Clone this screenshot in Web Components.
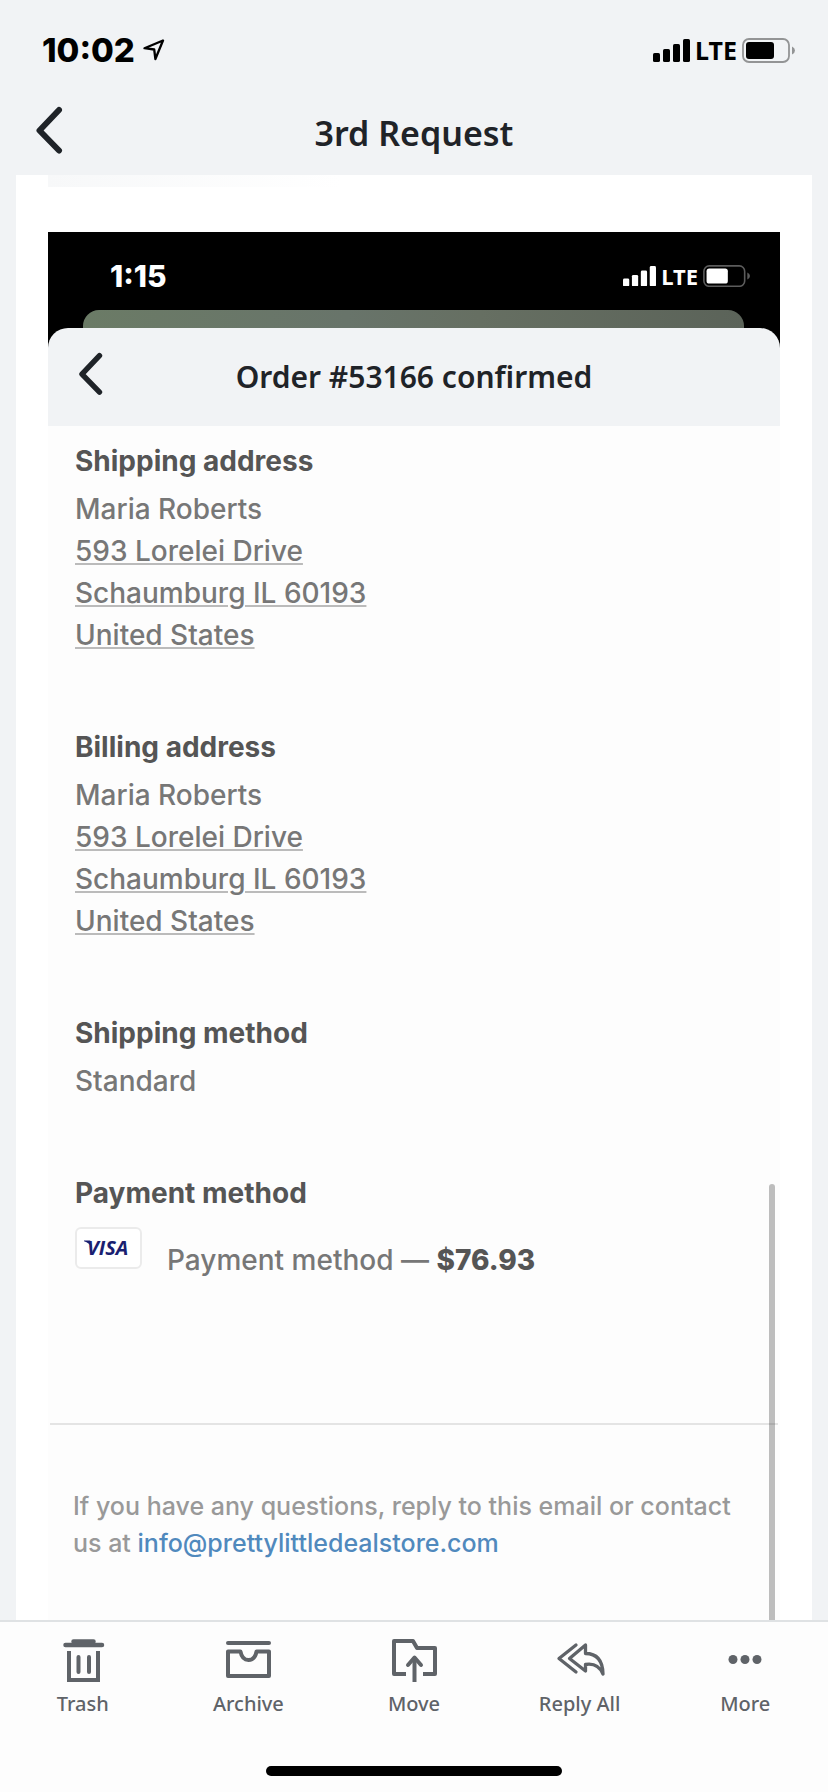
<!DOCTYPE html>
<html lang="en">
<head>
<meta charset="utf-8">
<meta name="viewport" content="width=device-width, initial-scale=1">
<title>3rd Request</title>
<style>
  html, body { margin: 0; height: 100%; }
  body { font-family: Inter, "Liberation Sans", sans-serif; background: #f1f3f5; }
</style>
</head>
<body>
<mail-screen>
  <status-bar slot="status" level="28" located>10:02</status-bar>
  <nav-header slot="header">3rd Request</nav-header>
  <shared-capture>
    <status-bar slot="status" level="24" compact>1:15</status-bar>
    <nav-header slot="header" compact>Order #53166 confirmed</nav-header>
    <order-section heading="Shipping address">
      <span>Maria Roberts</span>
      <address-link>593 Lorelei Drive</address-link>
      <address-link>Schaumburg IL 60193</address-link>
      <address-link>United States</address-link>
    </order-section>
    <order-section heading="Billing address">
      <span>Maria Roberts</span>
      <address-link>593 Lorelei Drive</address-link>
      <address-link>Schaumburg IL 60193</address-link>
      <address-link>United States</address-link>
    </order-section>
    <order-section heading="Shipping method">
      <span>Standard</span>
    </order-section>
    <order-section heading="Payment method">
      <payment-line amount="$76.93">Payment method —</payment-line>
    </order-section>
    <contact-note slot="footer" email="info@prettylittledealstore.com">If you have any questions, reply to this email or contact us at</contact-note>
  </shared-capture>
  <action-bar slot="actions">
    <action-button icon="trash">Trash</action-button>
    <action-button icon="archive">Archive</action-button>
    <action-button icon="move">Move</action-button>
    <action-button icon="replyall">Reply All</action-button>
    <action-button icon="more">More</action-button>
  </action-bar>
</mail-screen>

<script>
class Base extends HTMLElement {
  connectedCallback() {
    if (this.shadowRoot) return;
    this.attachShadow({ mode: 'open' }).innerHTML = this.render();
  }
}

customElements.define('mail-screen', class extends Base {
  render() {
    return `<style>
      :host { display: flex; flex-direction: column; height: 100vh; overflow: hidden; background: #f1f3f5; }
      main { flex: 1; min-height: 0; overflow: hidden; margin: 0 16px; padding: 0 32px; background: #fff; }
      .edge { height: 12px; margin-bottom: 45px; background: linear-gradient(90deg, #f7f8f9, #fff 40%); }
    </style>
    <slot name="status"></slot>
    <slot name="header"></slot>
    <main><div class="edge"></div><slot></slot></main>
    <slot name="actions"></slot>`;
  }
});

customElements.define('status-bar', class extends Base {
  render() {
    const level = this.getAttribute('level');
    const arrow = this.hasAttribute('located')
      ? `<svg width="22" height="22" viewBox="0 0 22 22" aria-hidden="true"><path d="M20 1.5 1.5 9.2 11.2 10.5 12.4 20Z" fill="none" stroke="currentColor" stroke-width="2.3" stroke-linejoin="round"/></svg>` : '';
    return `<style>
      :host { display: flex; align-items: center; justify-content: space-between; box-sizing: border-box; height: 100px; padding: 0 33px 0 42px; color: #000;
        --time: 33px; --net: 25px; --sig: 37px; --bat: 53px; --line: #939495; }
      :host([compact]) { height: 78px; padding: 10px 30px 0 62px; color: #fff; --time: 30px; --net: 22px; --sig: 33px; --bat: 47px; --line: #5c5c5c; }
      .group { display: flex; align-items: center; gap: 5px; }
      .clock { gap: 8px; }
      time { font-weight: 800; font-size: var(--time); line-height: 40px; }
      .net { font: 700 var(--net)/40px "Noto Sans", sans-serif; }
      .sig { width: var(--sig); } .bat { width: var(--bat); }
      svg { display: block; }
    </style>
    <div class="group clock"><time><slot></slot></time>${arrow}</div>
    <div class="group">
      <svg class="sig" viewBox="0 0 37 23" fill="currentColor" aria-hidden="true"><rect y="14" width="7" height="9" rx="1.6"/><rect x="10" y="10" width="7" height="13" rx="1.6"/><rect x="20" y="5" width="7" height="18" rx="1.6"/><rect x="30" width="7" height="23" rx="1.6"/></svg>
      <span class="net">LTE</span>
      <svg class="bat" viewBox="0 0 53 25" aria-hidden="true"><rect x="1" y="1" width="46" height="23" rx="6" fill="none" stroke="var(--line)" stroke-width="1.8"/><rect x="4" y="4" width="${level}" height="17" rx="3" fill="currentColor"/><path d="M50 8.500q3 1.500 3 4t-3 4z" fill="var(--line)"/></svg>
    </div>`;
  }
});

customElements.define('nav-header', class extends Base {
  render() {
    return `<style>
      :host { display: grid; grid-template-columns: 80px 1fr 80px; align-items: center; box-sizing: border-box; height: 75px; padding: 0 2px 9px; color: #1f2328; --title: 34px; --icon: 30px; --inset: 32px; }
      :host([compact]) { height: 98px; padding: 0; --title: 30px; --icon: 27px; --inset: 29px; }
      button { all: unset; justify-self: start; padding-left: var(--inset); padding-bottom: 7px; cursor: pointer; }
      svg { display: block; width: var(--icon); }
      h1 { margin: 0; text-align: center; font: 600 var(--title)/48px "Noto Sans", sans-serif; white-space: nowrap; }
    </style>
    <button aria-label="Back"><svg viewBox="0 0 30 48" fill="none" stroke="currentColor" stroke-width="6" stroke-linecap="round" stroke-linejoin="round"><path d="M25 4 5.500 24.500 25 44.500"/></svg></button>
    <h1><slot></slot></h1>`;
  }
});

customElements.define('shared-capture', class extends Base {
  render() {
    return `<style>
      :host { display: block; position: relative; background: #fdfdfd; }
      .top { background: #000; }
      .behind { height: 18px; margin: 0 36px 0 35px; border-radius: 16px 16px 0 0; background: linear-gradient(90deg, #6b7b66, #68746a 40%, #666f62 60%, #5b6359); }
      .sheet { background: #f1f3f5; border-radius: 20px 20px 0 0; }
      .order { padding: 14px 27px 72px; }
      .foot { margin: 0 2px; border-top: 2px solid #e4e4e4; }
      .thumb { position: absolute; right: 5px; top: 952px; bottom: 0; width: 6px; border-radius: 3px; background: rgba(0,0,0,.25); }
    </style>
    <div class="top">
      <slot name="status"></slot>
      <div class="behind"></div>
      <div class="sheet"><slot name="header"></slot></div>
    </div>
    <div class="order"><slot></slot></div>
    <div class="foot"><slot name="footer"></slot></div>
    <div class="thumb"></div>`;
  }
});

customElements.define('order-section', class extends Base {
  render() {
    return `<style>
      :host { display: block; margin-bottom: 70px; font-size: 28px; line-height: 42px; color: #777; }
      h2 { margin: 0 0 6px; font-size: 28px; font-weight: 650; color: #555; }
      .lines { display: flex; flex-direction: column; align-items: flex-start; font-weight: 500; }
    </style>
    <h2>${this.getAttribute('heading')}</h2>
    <div class="lines"><slot></slot></div>`;
  }
});

customElements.define('address-link', class extends Base {
  render() {
    return `<style>
      :host { display: block; }
      a { color: inherit; text-decoration: underline; text-decoration-color: #bbb; text-decoration-thickness: 2px; text-underline-offset: 2px; }
    </style><a href="#map"><slot></slot></a>`;
  }
});

customElements.define('payment-line', class extends Base {
  render() {
    return `<style>
      :host { display: flex; align-items: flex-start; gap: 25px; padding-top: 7px; }
      .card { display: flex; align-items: center; justify-content: center; box-sizing: border-box; width: 67px; height: 42px; border: 2px solid #ebebeb; border-radius: 6px; background: #fff; }
      svg { display: block; }
      .text { padding-top: 12px; }
      b { font-weight: 800; color: #555; }
    </style>
    <span class="card"><svg width="58" height="30" viewBox="0 0 58 30" fill="#1a1f71" role="img" aria-label="Visa"><path d="M4 7.500h6.200l2 7.500Q9.500 10 4 8.200z"/><text x="7" y="22" font-family="Open Sans, sans-serif" font-size="20" font-weight="700" font-style="italic">VISA</text></svg></span>
    <span class="text"><slot></slot> <b>${this.getAttribute('amount')}</b></span>`;
  }
});

customElements.define('contact-note', class extends Base {
  render() {
    const mail = this.getAttribute('email');
    return `<style>
      :host { display: block; padding: 63px 23px 120px; font-size: 25px; line-height: 37px; font-weight: 500; color: #999; }
      p { margin: 0; }
      a { color: #5089bd; text-decoration: none; }
    </style>
    <p><slot></slot> <a href="mailto:${mail}">${mail}</a></p>`;
  }
});

customElements.define('action-bar', class extends Base {
  render() {
    return `<style>
      :host { display: block; border-top: 2px solid #dfe2e4; background: #fdfdfd; }
      nav { display: grid; grid-template-columns: repeat(5, 1fr); padding-top: 14px; }
      .home { width: 296px; height: 10px; margin: 48px auto 16px; border-radius: 5px; background: #000; }
    </style>
    <nav aria-label="Message actions"><slot></slot></nav>
    <div class="home"></div>`;
  }
});

const ICONS = {
  trash: '<path d="M10.500 9h36.500M18.500 5.500h20" stroke-width="4.500"/><path d="M14 15v29h29V15" stroke-linecap="butt" stroke-linejoin="miter"/><path d="M23.500 21v15M34 21v15"/>',
  archive: '<path d="M8 7h41"/><path d="M8 15.500h12.500q1.500 8.500 8 8.500t8-8.500H49V40H8Z"/>',
  move: '<path d="M20 38H8V5h19l4 7h18v26H37" stroke-linecap="butt"/><path d="M28.500 46V23" stroke-linecap="butt"/><path d="m22 29 6.500-7.500L35 29"/>',
  replyall: '<path d="M24 9 7 22.500 24 36M33.500 9 17.500 22.500 33.500 35v-6.500Q46 26.500 51 38 50.500 17.500 33.500 17.500Z" stroke-width="3.300"/>',
  more: '<g fill="currentColor" stroke="none"><circle cx="16" cy="23.500" r="4.500"/><circle cx="28" cy="23.500" r="4.500"/><circle cx="40" cy="23.500" r="4.500"/></g>'
};

customElements.define('action-button', class extends Base {
  render() {
    return `<style>
      :host { display: block; color: #5f6368; }
      button { all: unset; display: flex; flex-direction: column; align-items: center; width: 100%; cursor: pointer; font: 500 20px/28px "Noto Sans", sans-serif; }
      svg { display: block; margin-bottom: 6px; }
    </style>
    <button><svg width="56" height="48" viewBox="0 0 56 48" fill="none" stroke="currentColor" stroke-width="4" stroke-linecap="round" stroke-linejoin="round" aria-hidden="true">${ICONS[this.getAttribute('icon')]}</svg><slot></slot></button>`;
  }
});
</script>
</body>
</html>
